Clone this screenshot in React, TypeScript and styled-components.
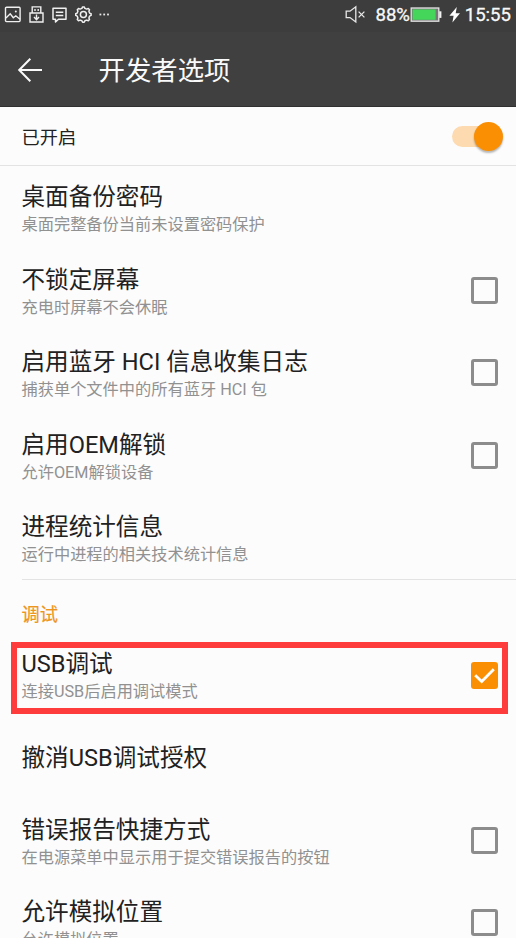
import React from "react";
import styled, { createGlobalStyle } from "styled-components";

const GlobalStyle = createGlobalStyle`
  * { box-sizing: border-box; }
  html, body { margin: 0; padding: 0; overflow: hidden; background: #fcfcfc; }
`;

const Screen = styled.div`
  width: 516px;
  height: 938px;
  overflow: hidden;
  display: flex;
  flex-direction: column;
  background: #fcfcfc;
  color: #212121;
  font-family: Roboto, "Noto Sans CJK SC", sans-serif;
  white-space: nowrap;
`;

const StatusBar = styled.div`
  flex: none;
  height: 32px;
  padding: 0 5px 2px 4px;
  display: flex;
  align-items: center;
  justify-content: space-between;
  background: #3d3d3d;
  color: #f8f8f8;
`;

const Notifications = styled.div`
  display: flex;
  align-items: center;
  gap: 5.5px;
  svg { display: block; }
`;

const Indicators = styled.div`
  display: flex;
  align-items: center;
  svg { display: block; }
`;

const StatusText = styled.span<{ $width: number }>`
  width: ${(p) => p.$width}px;
  font-size: 18.6px;
  font-weight: 400;
  -webkit-text-stroke: 0.3px currentColor;
  line-height: 30px;
  text-align: right;
`;

const Header = styled.header`
  flex: none;
  height: 74.5px;
  padding: 2px 18px 0 17px;
  display: flex;
  align-items: center;
  gap: 55.5px;
  background: #404040;
  border-bottom: 1px solid #303030;
  color: #fafafa;
  svg { display: block; }
`;

const HeaderTitle = styled.h1`
  margin: 0;
  padding-top: 2px;
  font-size: 26.4px;
  font-weight: 400;
  line-height: 38px;
`;

const MasterRow = styled.div`
  flex: none;
  height: 59.5px;
  padding: 1px 13px 0 21.5px;
  display: flex;
  align-items: center;
  justify-content: space-between;
  border-bottom: 1.5px solid #e3e3e3;
  font-size: 18.2px;
`;

const Track = styled.div`
  grid-area: 1 / 1;
  width: 42px;
  height: 21px;
  border-radius: 11px;
  background: #fddab0;
`;

const Thumb = styled.div`
  grid-area: 1 / 1;
  justify-self: end;
  width: 29px;
  height: 29px;
  border-radius: 50%;
  background: #fb8f04;
  box-shadow: 0 2px 2px rgba(0, 0, 0, 0.28);
`;

const Switch = styled.div`
  width: 51px;
  height: 29px;
  display: grid;
  align-items: center;
`;

const Row = styled.div`
  flex: none;
  height: 82.6px;
  padding: 1px 18px 0 21.5px;
  display: flex;
  align-items: center;
  justify-content: space-between;
`;

const Labels = styled.div<{ $twoLine: boolean }>`
  display: flex;
  flex-direction: column;
  padding-top: ${(p) => (p.$twoLine ? 2.6 : 0)}px;
`;

const Title = styled.div`
  font-size: 23.6px;
  line-height: 32px;
`;

const Summary = styled.div`
  font-size: 16.23px;
  line-height: 24px;
  color: #919191;
`;

const Checkbox = styled.div<{ $checked: boolean }>`
  flex: none;
  width: 27px;
  height: 27px;
  border-radius: 3px;
  border: ${(p) => (p.$checked ? "none" : "3px solid #8c8c8c")};
  background: ${(p) => (p.$checked ? "#fb8f04" : "transparent")};
  svg { display: block; }
`;

const SectionLabel = styled.div`
  flex: none;
  height: 54.3px;
  margin-left: 21.5px;
  padding-top: 21.5px;
  border-top: 1.5px solid #e3e3e3;
  font-size: 18.2px;
  line-height: 27px;
  color: #ee9520;
  -webkit-text-stroke: 0.2px currentColor;
`;

const Highlighted = styled.div`
  flex: none;
  position: relative;
`;

const HighlightFrame = styled.div`
  position: absolute;
  top: 8.5px;
  left: 11px;
  right: 8px;
  height: 72px;
  border: 6px solid #fe3c3c;
`;

type Preference = { title: string; summary?: string; checked?: boolean };

const general: Preference[] = [
  { title: "桌面备份密码", summary: "桌面完整备份当前未设置密码保护" },
  { title: "不锁定屏幕", summary: "充电时屏幕不会休眠", checked: false },
  { title: "启用蓝牙 HCI 信息收集日志", summary: "捕获单个文件中的所有蓝牙 HCI 包", checked: false },
  { title: "启用OEM解锁", summary: "允许OEM解锁设备", checked: false },
  { title: "进程统计信息", summary: "运行中进程的相关技术统计信息" },
];

const debugging: Preference[] = [
  { title: "撤消USB调试授权" },
  { title: "错误报告快捷方式", summary: "在电源菜单中显示用于提交错误报告的按钮", checked: false },
  { title: "允许模拟位置", summary: "允许模拟位置", checked: false },
];

function PreferenceRow({ title, summary, checked }: Preference) {
  return (
    <Row>
      <Labels $twoLine={summary !== undefined}>
        <Title>{title}</Title>
        {summary && <Summary>{summary}</Summary>}
      </Labels>
      {checked !== undefined && (
        <Checkbox $checked={checked}>
          {checked && (
            <svg width="27" height="27" viewBox="0 0 27 27" fill="none" stroke="#fff" strokeWidth="2.8">
              <path d="M4.2 13.3 L10.7 19.5 L22.8 7.3" />
            </svg>
          )}
        </Checkbox>
      )}
    </Row>
  );
}

const ImageIcon = () => (
  <svg width="18" height="18" viewBox="0 0 18 18" fill="none" stroke="#f0f0f0" strokeWidth="1.4">
    <rect x="1.5" y="1.2" width="14.6" height="14.4" rx="1" />
    <path d="M2 12 L6.2 7.8 L9.3 11.7 L11.8 9.8 L16 13.3" />
    <circle cx="11.8" cy="5.5" r="1" fill="#f0f0f0" stroke="none" />
  </svg>
);

const UsbIcon = () => (
  <svg width="18" height="18" viewBox="0 0 18 18" fill="none" stroke="#f0f0f0" strokeWidth="1.4">
    <path d="M4.2 7 V0.9 H12.8 V7 M2 7 H15 V16 H2 Z" />
    <path d="M7 3 V5 M10.2 3 V5 M8.5 8.5 V13.5 M6 11 L8.5 13.7 L11 11" />
  </svg>
);

const MessageIcon = () => (
  <svg width="18" height="18" viewBox="0 0 18 18" fill="none" stroke="#f0f0f0" strokeWidth="1.5">
    <path d="M2 2.2 H15 V13.2 H7.5 L4.5 16 V13.2 H2 Z" strokeLinejoin="round" />
    <path d="M4.8 6.3 H12.3 M4.8 9.4 H12.3" />
  </svg>
);

const GearIcon = () => (
  <svg width="18" height="18" viewBox="0 0 18 18" fill="none" stroke="#f0f0f0" strokeWidth="1.5" strokeLinejoin="round">
    <g transform="translate(-0.4 -0.6)">
      <path d="M7.3 3 L8 1.5 H9.6 L10.3 3 L12.1 3.7 L13.7 3.1 L14.9 4.3 L14.3 5.9 L15 7.7 L16.5 8.4 V10 L15 10.7 L14.3 12.5 L14.9 14.1 L13.7 15.3 L12.1 14.7 L10.3 15.4 L9.6 16.9 H8 L7.3 15.4 L5.5 14.7 L3.9 15.3 L2.7 14.1 L3.3 12.5 L2.6 10.7 L1.1 10 V8.4 L2.6 7.7 L3.3 5.9 L2.7 4.3 L3.9 3.1 L5.5 3.7 Z" />
      <circle cx="8.8" cy="9.2" r="3" />
    </g>
  </svg>
);

const MoreIcon = () => (
  <svg width="12" height="18" viewBox="0 0 12 18" fill="#e8e8e8">
    <rect x="1.5" y="7.6" width="1.8" height="1.8" />
    <rect x="5.3" y="7.6" width="1.8" height="1.8" />
    <rect x="9.1" y="7.6" width="1.8" height="1.8" />
  </svg>
);

const MutedIcon = () => (
  <svg width="22" height="20" viewBox="0 0 22 20" fill="none" stroke="#e8e8e8" strokeWidth="1.3">
    <path d="M1.2 6.2 H5 L10.8 1.8 V17 L5 12.6 H1.2 Z" />
    <path d="M13.6 6.6 L19.4 12.4 M19.4 6.6 L13.6 12.4" />
  </svg>
);

const BatteryIcon = () => (
  <svg width="32" height="16" viewBox="0 0 32 16">
    <rect x="1.2" y="1" width="27.6" height="13.2" fill="#777" stroke="#e4e4e4" strokeWidth="1.3" />
    <rect x="2.6" y="2.4" width="23" height="10.4" fill="#43d65b" />
    <rect x="29.2" y="4.3" width="2.2" height="6.6" fill="#f2f2f2" />
  </svg>
);

const ChargeIcon = () => (
  <svg width="12" height="18" viewBox="0 0 12 18" fill="#fff">
    <path d="M7.8 1 L0.4 9.8 H4.6 L3.4 16.5 L11 7.3 H6.7 Z" />
  </svg>
);

const Spacer = styled.span`
  width: 7px;
`;

export default function App() {
  return (
    <>
      <GlobalStyle />
      <Screen>
        <StatusBar>
          <Notifications>
            <ImageIcon />
            <UsbIcon />
            <MessageIcon />
            <GearIcon />
            <MoreIcon />
          </Notifications>
          <Indicators>
            <MutedIcon />
            <StatusText $width={43}>88%</StatusText>
            <BatteryIcon />
            <Spacer />
            <ChargeIcon />
            <StatusText $width={50}>15:55</StatusText>
          </Indicators>
        </StatusBar>
        <Header>
          <svg width="26" height="26" viewBox="0 0 26 26" fill="none" stroke="#fafafa" strokeWidth="2">
            <path d="M25 13 H2.5 M13.3 1.8 L2.2 13 L13.3 24.2" />
          </svg>
          <HeaderTitle>开发者选项</HeaderTitle>
        </Header>
        <MasterRow>
          已开启
          <Switch>
            <Track />
            <Thumb />
          </Switch>
        </MasterRow>
        {general.map((item) => (
          <PreferenceRow key={item.title} {...item} />
        ))}
        <SectionLabel>调试</SectionLabel>
        <Highlighted>
          <PreferenceRow title="USB调试" summary="连接USB后启用调试模式" checked />
          <HighlightFrame />
        </Highlighted>
        {debugging.map((item) => (
          <PreferenceRow key={item.title} {...item} />
        ))}
      </Screen>
    </>
  );
}
